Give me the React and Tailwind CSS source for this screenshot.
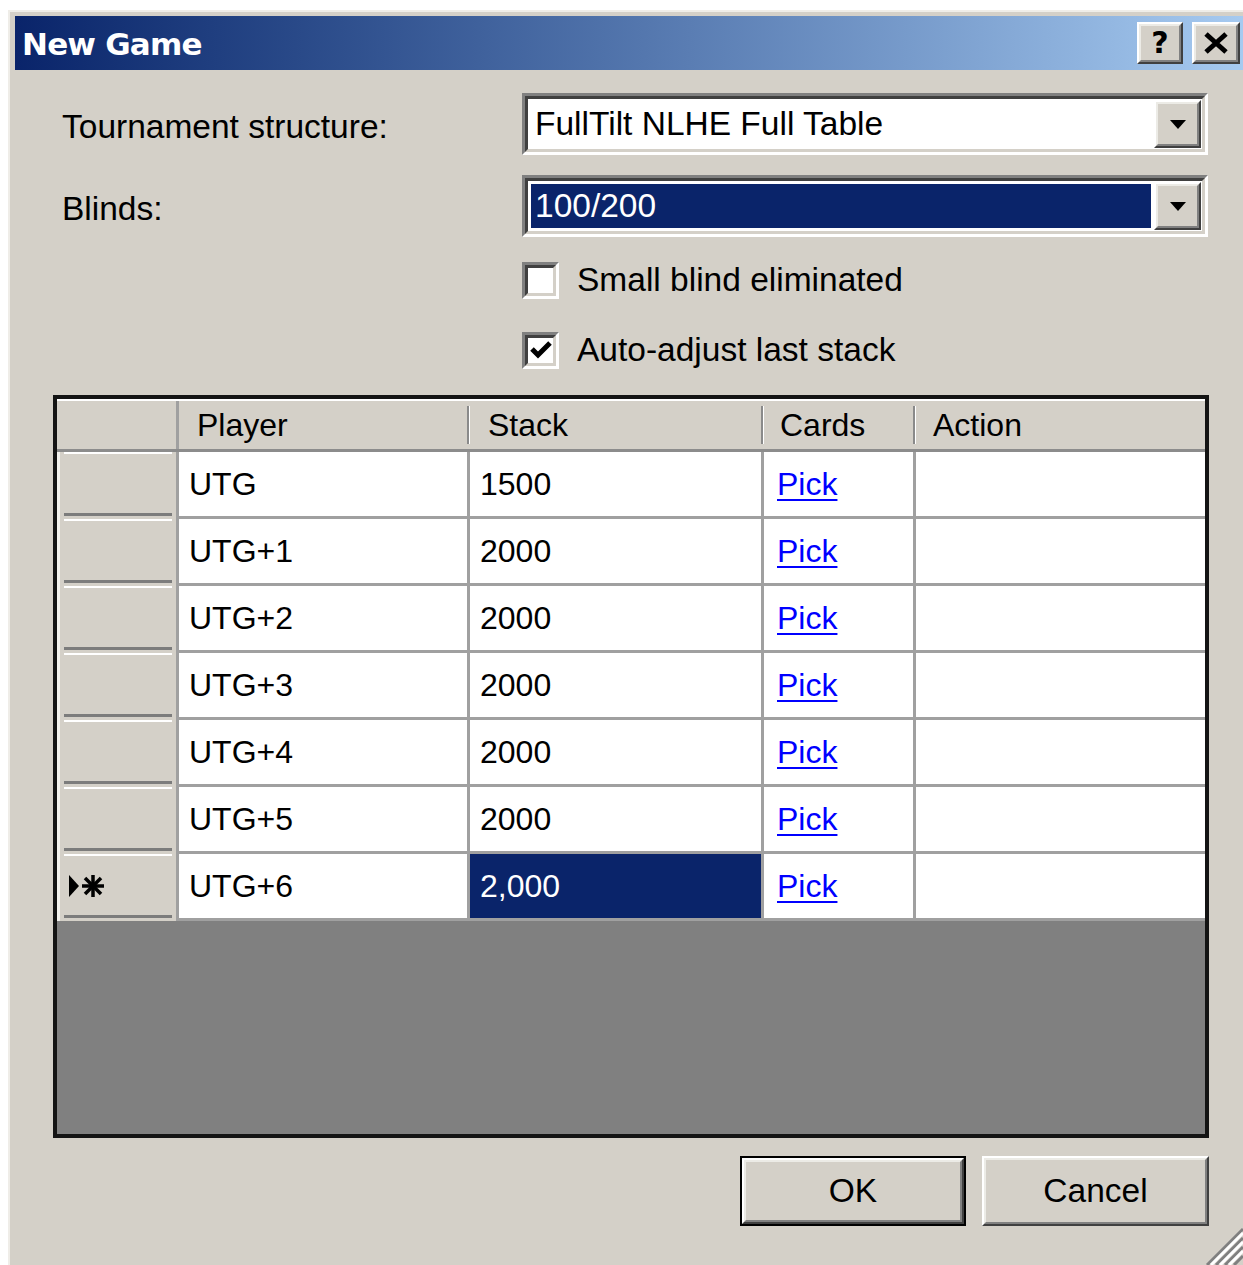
import React from "react";

const rows = [
  { name: "UTG", stack: "1500" },
  { name: "UTG+1", stack: "2000" },
  { name: "UTG+2", stack: "2000" },
  { name: "UTG+3", stack: "2000" },
  { name: "UTG+4", stack: "2000" },
  { name: "UTG+5", stack: "2000" },
  { name: "UTG+6", stack: "2,000", current: true },
];

// Classic raised 3D frame (buttons)
function Raised({ className = "", innerClassName = "", children }) {
  return (
    <div
      className={
        "border-[2px] border-t-white border-l-white border-r-[#404040] border-b-[#404040] bg-[#d4d0c8] " +
        className
      }
    >
      <div
        className={
          "w-full h-full border-[2px] border-t-[#ecebe6] border-l-[#ecebe6] border-r-[#808080] border-b-[#808080] " +
          innerClassName
        }
      >
        {children}
      </div>
    </div>
  );
}

// Classic sunken 3D frame (edit / combo / checkbox)
function Sunken({ className = "", innerClassName = "", children }) {
  return (
    <div
      className={
        "border-[3px] border-t-[#808080] border-l-[#808080] border-r-white border-b-white " +
        className
      }
    >
      <div
        className={
          "w-full h-full border-[3px] border-t-[#404040] border-l-[#404040] border-r-[#d4d0c8] border-b-[#d4d0c8] bg-white " +
          innerClassName
        }
      >
        {children}
      </div>
    </div>
  );
}

function DropArrow() {
  return (
    <Raised className="w-[47px] h-[48px] shrink-0" innerClassName="flex items-center justify-center">
      <svg width="16" height="9" viewBox="0 0 16 9">
        <polygon points="0,0 16,0 8,9" fill="#000" />
      </svg>
    </Raised>
  );
}

function Combo({ text, selected }) {
  return (
    <Sunken className="w-[686px] h-[62px]" innerClassName="flex items-stretch">
      <div className="flex-1 flex items-center p-[3px]">
        <div
          className={
            "h-full w-full flex items-center pl-[4px] " +
            (selected ? "bg-[#0a246a] text-white" : "text-black")
          }
        >
          {text}
        </div>
      </div>
      <div className="flex items-center pr-[1px]">
        <DropArrow />
      </div>
    </Sunken>
  );
}

function Checkbox({ checked, label }) {
  return (
    <div className="flex items-center h-[36px]">
      <Sunken className="w-[37px] h-[37px]" innerClassName="flex items-center justify-center">
        {checked && (
          <svg width="22" height="22" viewBox="0 0 22 22">
            <path d="M2 10 L8 16 L20 4" stroke="#000" strokeWidth="5" fill="none" strokeLinejoin="miter" />
          </svg>
        )}
      </Sunken>
      <span className="ml-[18px] text-black">{label}</span>
    </div>
  );
}

function HeaderCell({ w, label, sep = true, pl }) {
  return (
    <div className={"h-full flex items-center justify-between shrink-0 " + w}>
      <span className={pl}>{label}</span>
      {sep && <div className="w-[3px] h-[38px] border-l-[2px] border-[#8a8a8a] border-r-[1px] border-r-white" />}
    </div>
  );
}

// Current-row / new-row glyph in the row header
function RowMarker() {
  return (
    <svg width="44" height="28" viewBox="0 0 44 28">
      <polygon points="0,3 10,14 0,25" fill="#000" />
      <g stroke="#000" strokeWidth="3.5">
        <line x1="24" y1="3" x2="24" y2="25" />
        <line x1="13" y1="14" x2="35" y2="14" />
        <line x1="16" y1="6" x2="32" y2="22" />
        <line x1="32" y1="6" x2="16" y2="22" />
      </g>
    </svg>
  );
}

function GridRow({ row }) {
  return (
    <div className="flex h-[67px]">
      <div className="w-[122px] shrink-0 h-full bg-[#d4d0c8] border-l-[3px] border-l-[#f2f1ed] border-r-[3px] border-r-[#a0a0a0] flex flex-col">
        <div className="h-[2px] ml-[4px] mr-[4px] bg-white" />
        <div className="flex-1 flex items-center pl-[9px]">{row.current && <RowMarker />}</div>
        <div className="h-[3px] ml-[4px] mr-[4px] bg-[#7c7c7c]" />
        <div className="h-[3px]" />
      </div>
      <div className="w-[291px] shrink-0 h-full bg-white border-r-[3px] border-b-[3px] border-[#a0a0a0] flex items-center pl-[10px]">
        {row.name}
      </div>
      <div
        className={
          "w-[294px] shrink-0 h-full border-r-[3px] border-b-[3px] border-[#a0a0a0] flex items-center pl-[10px] " +
          (row.current ? "bg-[#0a246a] text-white" : "bg-white")
        }
      >
        {row.stack}
      </div>
      <div className="w-[152px] shrink-0 h-full bg-white border-r-[3px] border-b-[3px] border-[#a0a0a0] flex items-center pl-[13px]">
        <span className="text-[#0000ff] underline decoration-[2px] underline-offset-[4px]">Pick</span>
      </div>
      <div className="flex-1 h-full bg-white border-b-[3px] border-[#a0a0a0]" />
    </div>
  );
}

export default function App() {
  return (
    <div className="w-[1243px] h-[1265px] bg-white overflow-hidden font-['Liberation_Sans',Arial,sans-serif] text-[33.5px] leading-none text-black">
      <div className="relative ml-[8px] mt-[10px] w-[1235px] h-[1255px] bg-[#d4d0c8] border-l-[2px] border-t-[2px] border-[#efede8] pl-[5px] pt-[4px] flex flex-col">
        {/* Title bar */}
        <div className="h-[54px] w-[1228px] shrink-0 flex items-start bg-gradient-to-r from-[#0a246a] to-[#a6caf0]">
          <div className="h-full flex items-center pl-[7px] pt-[2px] font-['DejaVu_Sans',Verdana,sans-serif] font-bold text-[31px] text-white tracking-[-0.8px]">
            New Game
          </div>
          <div className="ml-auto flex gap-[9px] pt-[6px] pr-[3px]">
            <Raised className="w-[46px] h-[42px]" innerClassName="flex items-center justify-center">
              <span className="font-['DejaVu_Sans',sans-serif] font-bold text-[30px] leading-none">?</span>
            </Raised>
            <Raised className="w-[48px] h-[42px]" innerClassName="flex items-center justify-center">
              <svg width="26" height="22" viewBox="0 0 26 22">
                <path d="M3 2 L23 20 M23 2 L3 20" stroke="#000" strokeWidth="5" />
              </svg>
            </Raised>
          </div>
        </div>

        {/* Form fields */}
        <div className="pl-[47px] flex flex-col">
          <div className="mt-[23px] flex items-center h-[62px]">
            <span className="w-[460px] shrink-0 pt-[6px]">Tournament structure:</span>
            <Combo text="FullTilt NLHE Full Table" />
          </div>
          <div className="mt-[20px] flex items-center h-[62px]">
            <span className="w-[460px] shrink-0 pt-[6px]">Blinds:</span>
            <Combo text="100/200" selected />
          </div>
          <div className="mt-[25px] pl-[460px]">
            <Checkbox label="Small blind eliminated" />
          </div>
          <div className="mt-[34px] pl-[460px]">
            <Checkbox checked label="Auto-adjust last stack" />
          </div>
        </div>

        {/* Players grid */}
        <div className="mt-[27px] ml-[38px] w-[1156px] h-[743px] border-[4px] border-[#141414] bg-[#808080] flex flex-col text-[32px]">
          <div className="h-[53px] shrink-0 flex bg-[#d4d0c8] border-t-[2px] border-t-white border-b-[3px] border-b-[#8c8c8c]">
            <div className="w-[122px] shrink-0 h-full border-r-[3px] border-[#a0a0a0]" />
            <HeaderCell w="w-[291px]" label="Player" pl="pl-[18px]" />
            <HeaderCell w="w-[294px]" label="Stack" pl="pl-[18px]" />
            <HeaderCell w="w-[152px]" label="Cards" pl="pl-[16px]" />
            <HeaderCell w="flex-1" label="Action" pl="pl-[17px]" sep={false} />
          </div>
          {rows.map((r) => (
            <GridRow key={r.name} row={r} />
          ))}
        </div>

        {/* Dialog buttons */}
        <div className="mt-[18px] ml-[725px] flex gap-[16px]">
          <div className="w-[226px] h-[70px] border-[2px] border-black">
            <Raised className="w-full h-full" innerClassName="flex items-center justify-center">
              OK
            </Raised>
          </div>
          <Raised className="w-[227px] h-[70px]" innerClassName="flex items-center justify-center">
            Cancel
          </Raised>
        </div>

        {/* Size grip */}
        <svg className="absolute right-0 bottom-0" width="40" height="40" viewBox="0 0 40 40">
          <g strokeWidth="3">
            <line x1="40" y1="4" x2="4" y2="40" stroke="#808080" />
            <line x1="40" y1="8" x2="8" y2="40" stroke="#ffffff" />
            <line x1="40" y1="13" x2="13" y2="40" stroke="#808080" />
            <line x1="40" y1="17" x2="17" y2="40" stroke="#ffffff" />
            <line x1="40" y1="22" x2="22" y2="40" stroke="#808080" />
            <line x1="40" y1="26" x2="26" y2="40" stroke="#ffffff" />
            <line x1="40" y1="31" x2="31" y2="40" stroke="#808080" />
          </g>
        </svg>
      </div>
    </div>
  );
}
